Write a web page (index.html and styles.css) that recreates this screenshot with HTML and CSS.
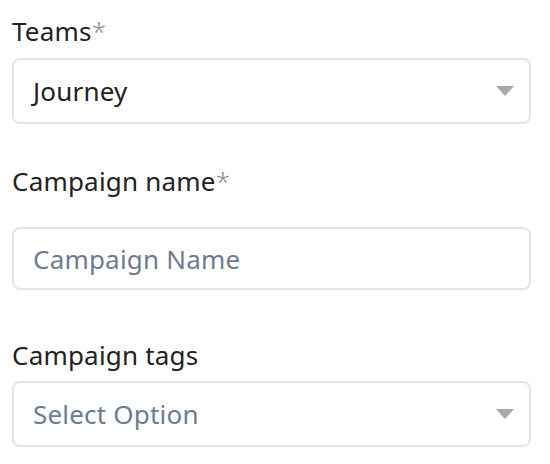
FILE: index.html
```html
<!DOCTYPE html>
<html>
<head>
<meta charset="utf-8">
<link rel="stylesheet" href="styles.css">
</head>
<body>
<form class="form">
  <div class="field field-teams">
    <label class="label">Teams<span class="req">*</span></label>
    <div class="control select">
      <span class="value">Journey</span>
      <span class="caret"></span>
    </div>
  </div>
  <div class="field field-name">
    <label class="label">Campaign name<span class="req">*</span></label>
    <div class="control input input-name">
      <span class="placeholder">Campaign Name</span>
    </div>
  </div>
  <div class="field field-tags">
    <label class="label">Campaign tags</label>
    <div class="control select">
      <span class="placeholder">Select Option</span>
      <span class="caret"></span>
    </div>
  </div>
</form>
</body>
</html>
```

FILE: styles.css
```css
html, body {
  margin: 0;
  padding: 0;
  background: #ffffff;
}
body {
  font-family: "Noto Sans", "Lato", sans-serif;
  color: #262626;
}
.form {
  width: 519px;
  padding: 15px 0 0 12px;
  display: flex;
  flex-direction: column;
}
.field {
  display: flex;
  flex-direction: column;
}
.label {
  font-size: 26px;
  line-height: 32px;
  font-weight: 380;
  letter-spacing: 0.2px;
  color: #222222;
}
.req {
  color: #8a8a8a;
  font-weight: 300;
}
.control {
  box-sizing: border-box;
  height: 66px;
  border: 2px solid #dfe4ef;
  border-radius: 8px;
  display: flex;
  align-items: center;
  justify-content: space-between;
  padding: 0 15px 0 19px;
  font-size: 26px;
  font-weight: 380;
  letter-spacing: 0.2px;
}
.field-teams .control { margin-top: 11px; }
.field-name { margin-top: 41px; }
.field-name .control { margin-top: 30px; height: 63px; }
.field-tags { margin-top: 49px; }
.field-tags .control { margin-top: 10px; }
.value { color: #222222; }
.placeholder { color: #6d7c93; }
.caret {
  width: 0;
  height: 0;
  border-left: 9.5px solid transparent;
  border-right: 9.5px solid transparent;
  border-top: 10px solid #a8a8a8;
}
```
